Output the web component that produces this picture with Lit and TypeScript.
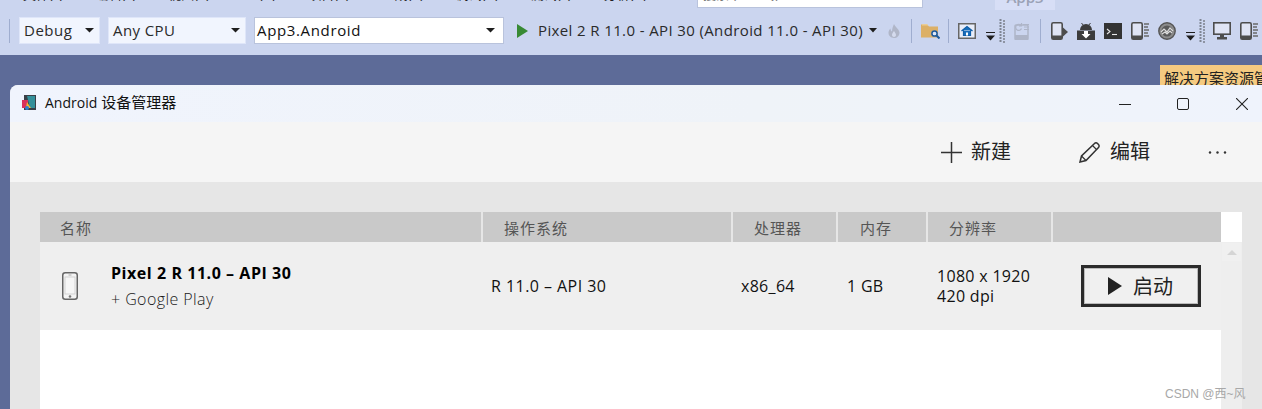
import { LitElement, html, css, svg } from "lit";
import { customElement } from "lit/decorators.js";

const caret = html`<svg class="caret" width="9" height="5" viewBox="0 0 9 5"><path d="M0 0h9L4.500 4.500z" fill="#1e1e1e"/></svg>`;
const dropdown = html`<svg class="dd" width="9" height="9" viewBox="0 0 9 9"><path d="M0 0.500h9" stroke="#1e1e1e" stroke-width="1"/><path d="M0 3.500h9L4.500 8.500z" fill="#1e1e1e"/></svg>`;
const grip = html`<svg class="grip" width="7" height="24" viewBox="0 0 7 24">${Array.from({ length: 8 }, (_, i) => svg`<rect x="0.500" y="${i * 3}" width="2" height="2" fill="#7f8593"/><rect x="4" y="${i * 3 + 1}" width="2" height="2" fill="#8e94a3"/>`)}</svg>`;
const deviceList = html`<svg class="ic" width="18" height="18" viewBox="0 0 18 18"><rect x="0.800" y="0.800" width="10.400" height="16.400" rx="1.500" fill="#dfe4f4" stroke="#4d4d4d" stroke-width="1.600"/><rect x="1" y="13.500" width="10" height="3.500" fill="#4d4d4d"/><path d="M13 2h5M13 5h4M13 8h5M13 11h4M13 14h5" stroke="#6a6a6a" stroke-width="1.500"/></svg>`;

@customElement("app-root")
export class AppRoot extends LitElement {
  static styles = css`
    :host { display: block; width: 1262px; height: 409px; overflow: hidden; position: relative; background: #5d6b98; font-family: "Open Sans", "Noto Sans CJK SC", sans-serif; color: #1e1e1e; }
    * { box-sizing: border-box; }
    .chrome { height: 55px; background: #cbd5ef; display: flex; flex-direction: column; }
    .menu { height: 10px; display: flex; align-items: flex-start; overflow: hidden; position: relative; }
    .menu-items { display: flex; gap: 32px; margin: -15px 0 0 23px; font: 13px/18px "Open Sans", "Noto Sans CJK SC", sans-serif; height: 18px; white-space: nowrap; }
    .search { position: absolute; left: 697px; top: 0; width: 226px; height: 8px; background: #fff; border: 1px solid #b9c3dc; border-top: 0; overflow: hidden; font-size: 13px; line-height: 18px; color: #777; }
    .search span { display: block; margin: -15px 0 0 5px; }
    .appbtn { position: absolute; left: 995px; top: 0; width: 60px; height: 10px; background: #d7def6; overflow: hidden; color: #9aa1b5; font-size: 15px; font-weight: 600; line-height: 18px; text-align: center; }
    .appbtn span { display: block; margin-top: -12px; }
    .tools { height: 27px; margin-top: 7px; display: flex; align-items: center; }
    .sep { width: 1px; height: 24px; background: #9fadcf; flex: none; }
    .s0 { margin-left: 9px; }
    .combo { height: 27px; display: flex; align-items: center; justify-content: space-between; background: #f1f5fe; border: 1px solid #dfe6f9; font-size: 15px; flex: none; color: #2a2a2a; }
    .combo span { margin-top: -2px; }
    .debug { width: 81px; margin-left: 9px; padding: 0 5px 0 4px; letter-spacing: 0.5px; }
    .cpu { width: 138px; margin-left: 8px; padding: 0 5px 0 4px; letter-spacing: 0.4px; }
    .proj { width: 250px; margin-left: 8px; padding: 0 8px 0 2px; background: #fff; border-color: #b9c3dc; color: #111; letter-spacing: 0.65px; }
    .play { margin-left: 13px; flex: none; }
    .target { margin: -2px 0 0 10px; font-size: 15px; letter-spacing: 0.38px; white-space: nowrap; color: #2a2a2a; width: 326px; flex: none; }
    .tcaret { margin-left: 5px; flex: none; }
    .flame { margin-left: 11px; flex: none; }
    .s1 { margin-left: 11px; }
    .folder { margin-left: 9px; flex: none; }
    .s2 { margin-left: 8px; }
    .home { margin-left: 9px; flex: none; }
    .dd { margin: 12px 0 0 10px; flex: none; }
    .grip { margin-left: 4px; flex: none; }
    .refresh { margin-left: 8px; flex: none; }
    .s3 { margin-left: 10px; }
    .ic { flex: none; margin-left: 9px; }
    .i1 { margin-left: 10px; }
    .mon { margin-left: 7px; }
    .desk { height: 30px; display: flex; justify-content: flex-end; padding-top: 10px; }
    .tab { width: 102px; height: 20px; background: #f5ca80; overflow: hidden; padding: 3px 0 0 4px; font-size: 15px; line-height: 20px; white-space: nowrap; color: #222; }
    .win { margin-left: 10px; height: 324px; border-radius: 8px 0 0 0; overflow: hidden; background: #e6e6e6; display: flex; flex-direction: column; }
    .title { height: 37px; flex: none; display: flex; align-items: center; background: linear-gradient(90deg, #f0f4fd, #eff3f8 60%, #eff3fc); padding: 0 0 2px 12px; font-size: 15px; color: #111; }
    .title .name { margin: -2px 0 0 8px; }
    .title .lat { font-size: 14px; }
    .wc { margin-left: auto; display: flex; align-items: center; margin-top: 2px; }
    .wc svg { flex: none; }
    .wc .mx { margin-left: 46px; }
    .wc .cl { margin: 0 14px 0 47px; }
    .cmd { height: 60px; flex: none; background: #f5f5f5; display: flex; align-items: center; justify-content: flex-end; font-size: 20px; color: #222; }
    .cmd .lbl { margin-left: 9px; line-height: 64px; }
    .cmd .l2 { margin-left: 10px; }
    .cmd .edit { margin-left: 68px; }
    .cmd .more { margin: 0 35px 0 58px; }
    .content { flex: 1; padding: 30px 20px 0 30px; display: flex; min-height: 0; }
    .tablewrap { flex: none; width: 1181px; background: #fff; display: flex; flex-direction: column; }
    .head { height: 30px; display: grid; grid-template-columns: 441px 248px 103px 88px 123px 1fr; gap: 2px; background: #e6e6e6; flex: none; }
    .head div { background: #c9c9c9; font-size: 15px; line-height: 33px; color: #555; letter-spacing: 1px; }
    .h1 { padding-left: 20px; } .h2 { padding-left: 21px; } .h3 { padding-left: 21px; } .h4 { padding-left: 22px; } .h5 { padding-left: 21px; }
    .row { height: 88px; flex: none; background: #efefef; display: grid; grid-template-columns: 443px 250px 106px 90px 152px 1fr; align-items: center; font-size: 16px; color: #111; }
    .namecell { display: flex; align-items: center; padding-left: 22px; }
    .names { margin-left: 33px; display: flex; flex-direction: column; }
    .names b { font-weight: 700; font-size: 16px; letter-spacing: 0.55px; line-height: 26px; color: #000; }
    .names span { font-size: 16px; letter-spacing: 0.42px; line-height: 26px; font-weight: 300; color: #1a1a1a; }
    .c2 { padding-left: 8px; letter-spacing: 0.45px; } .c3 { padding-left: 8px; letter-spacing: 0.3px; } .c4 { padding-left: 8px; letter-spacing: 0.3px; }
    .c5 { padding-left: 8px; line-height: 20px; letter-spacing: 0.3px; }
    .startc { display: flex; }
    .start { width: 120px; height: 42px; border: 3px solid #2b2b2b; box-shadow: inset 0 0 0 1px #bbb; background: #f0f0f0; display: flex; align-items: center; padding-left: 24px; font-size: 20px; color: #222; }
    .start svg { margin-right: 11px; flex: none; }
    .start span { margin-top: -2px; }
    .side { width: 21px; flex: none; display: flex; flex-direction: column; background: #fff; }
    .side .sp { height: 30px; flex: none; }
    .track { flex: 1; background: #eeeeee; display: flex; flex-direction: column; align-items: center; padding-top: 1px; }
    .up { width: 19px; height: 18px; display: flex; align-items: center; justify-content: center; background: #f0f0f0; }
    .mark { position: absolute; left: 1165px; top: 385px; font-size: 12px; line-height: 18px; color: #a8a8a8; font-family: "Liberation Sans", "Noto Sans CJK SC", sans-serif; white-space: nowrap; }
  `;

  render() {
    return html`
      <div class="chrome">
        <div class="menu">
          <div class="menu-items">
            <span>文件(F)</span><span>编辑(E)</span><span>视图(V)</span><span>Git(G)</span><span>项目(P)</span><span>生成(B)</span><span>调试(D)</span><span>测试(S)</span><span>分析(N)</span>
          </div>
          <div class="search"><span>搜索 (Ctrl+Q)</span></div>
          <div class="appbtn"><span>App3</span></div>
        </div>
        <div class="tools">
          <div class="sep s0"></div>
          <div class="combo debug"><span>Debug</span>${caret}</div>
          <div class="combo cpu"><span>Any CPU</span>${caret}</div>
          <div class="combo proj"><span>App3.Android</span>${caret}</div>
          <svg class="play" width="11" height="14" viewBox="0 0 11 14"><path d="M0 0l11 7-11 7z" fill="#388a34"/></svg>
          <div class="target">Pixel 2 R 11.0 - API 30 (Android 11.0 - API 30)</div>
          <svg class="tcaret" width="8" height="5" viewBox="0 0 8 5"><path d="M0 0h8L4 4.500z" fill="#1e1e1e"/></svg>
          <svg class="flame" width="12" height="14" viewBox="0 0 12 14"><path d="M6 0c1 3 5 5 5.500 8.500C11.500 12 9 14 6 14S.5 12 .5 8.800C.5 7 1.500 5.500 2.500 4.500c0 1.500.5 2.500 1.500 3C4 5 5 2 6 0z" fill="#b0b6c8"/><path d="M6 7c-1 1.500-2 2.500-2 4 0 1.200 1 2 2 2s2-.8 2-2c0-1.500-1.200-2.500-2-4z" fill="#d5dbee"/></svg>
          <div class="sep s1"></div>
          <svg class="folder" width="19" height="16" viewBox="0 0 19 16"><path d="M0 1.500h6l2 2h9v11H0z" fill="#dcb067"/><path d="M1 1h5l1.500 1.500H1z" fill="#eccd94"/><circle cx="13.500" cy="10.500" r="2.600" fill="#dfe8f8" stroke="#1c5a9e" stroke-width="1.500"/><path d="M15.500 12.500l3 3" stroke="#1c5a9e" stroke-width="2"/></svg>
          <div class="sep s2"></div>
          <svg class="home" width="18" height="16" viewBox="0 0 18 16"><rect x="0.750" y="0.750" width="16.500" height="14.500" fill="#e8edf9" stroke="#666" stroke-width="1.500"/><path d="M3.500 8L9 3.500 14.500 8M5.500 7.500v5h7v-5" fill="#1a6ebb" stroke="#0f5ea8" stroke-width="1.200"/><rect x="8" y="9.500" width="2" height="3" fill="#fff"/></svg>
          ${dropdown}${grip}
          <svg class="refresh" width="16" height="18" viewBox="0 0 16 18"><rect x="1" y="3" width="13" height="14.500" rx="1" fill="none" stroke="#aeb5c8" stroke-width="1.500"/><rect x="1" y="13" width="13" height="4" fill="#aeb5c8"/><path d="M7 3.500a3 3 0 1 0 .5 3M7.500 1v3H5" fill="none" stroke="#aeb5c8" stroke-width="1.200"/><path d="M9 2.500h6M10 5h5M10 7.500h5" stroke="#aeb5c8"/></svg>
          <div class="sep s3"></div>
          <svg class="ic i1" width="17" height="18" viewBox="0 0 17 18"><rect x="0.800" y="0.800" width="10.400" height="16.400" rx="1.500" fill="#dfe4f4" stroke="#4d4d4d" stroke-width="1.600"/><rect x="1" y="13.500" width="10" height="3.500" fill="#4d4d4d"/><path d="M12 5.500l5 4.500-5 4.500z" fill="#4d4d4d"/></svg>
          <svg class="ic" width="18" height="18" viewBox="0 0 18 18"><path d="M3 8a6 6 0 0 1 12 0z" fill="#3c3c3c"/><path d="M4.500 1l2 2.500M13.500 1l-2 2.500" stroke="#3c3c3c"/><rect x="0" y="8.500" width="18" height="9.500" fill="#3c3c3c"/><path d="M7 9h4v3h2.500L9 16.500 4.500 12H7z" fill="#fff"/></svg>
          <svg class="ic" width="18" height="16" viewBox="0 0 18 16"><rect width="18" height="16" fill="#333"/><path d="M3 6l3 2.500L3 11" fill="none" stroke="#e8e8e8" stroke-width="1.100"/><path d="M8 11.500h5" stroke="#e8e8e8" stroke-width="1.100"/></svg>
          ${deviceList}
          <svg class="ic" width="18" height="18" viewBox="0 0 18 18"><circle cx="9" cy="9" r="8.200" fill="#8c8c8c" stroke="#555" stroke-width="1.400"/><circle cx="9" cy="9" r="5.500" fill="#5a5a5a"/><path d="M3 10l3-3 3 3 3-4 3 3M4 12l3-2 2 2 3-3 2 2" fill="none" stroke="#dcdcdc" stroke-width="1.200"/></svg>
          ${dropdown}${grip}
          <svg class="ic mon" width="18" height="18" viewBox="0 0 18 18"><rect x="0.800" y="0.800" width="16.400" height="11.400" fill="#dfe4f4" stroke="#4d4d4d" stroke-width="1.600"/><path d="M7 13h4v2h3v2.500H4V15h3z" fill="#4d4d4d"/></svg>
          ${deviceList}
        </div>
      </div>
      <div class="desk"><div class="tab">解决方案资源管理器</div></div>
      <div class="win">
        <div class="title">
          <svg width="15" height="15" viewBox="0 0 15 15"><rect x="2" width="12" height="15" fill="#3a3f46"/><path d="M5 1h8v12H8z" fill="#34909a"/><path d="M0 5h6v8H0z" fill="#d9315c"/><path d="M5 7l4 6H4z" fill="#f2b632"/><circle cx="5" cy="13" r="2" fill="#2c7fd0"/></svg>
          <span class="name"><span class="lat">Android</span> 设备管理器</span>
          <div class="wc">
            <svg width="12" height="12" viewBox="0 0 12 12"><path d="M0 6.500h12" stroke="#222"/></svg>
            <svg class="mx" width="12" height="12" viewBox="0 0 12 12"><rect x="0.500" y="0.500" width="11" height="11" rx="1.500" fill="none" stroke="#222"/></svg>
            <svg class="cl" width="12" height="12" viewBox="0 0 12 12"><path d="M0 0l12 12M12 0L0 12" stroke="#222" stroke-width="1.100"/></svg>
          </div>
        </div>
        <div class="cmd">
          <svg width="21" height="21" viewBox="0 0 21 21"><path d="M0 10.500h21M10.500 0v21" stroke="#333" stroke-width="1.500"/></svg>
          <span class="lbl">新建</span>
          <svg class="edit" width="21" height="21" viewBox="0 0 21 21"><path d="M1 20l1.500-6L15.500 1.500a2.100 2.100 0 0 1 3 0l1 1a2.100 2.100 0 0 1 0 3L7 18.500z" fill="none" stroke="#333" stroke-width="1.500"/><path d="M13.500 3.500l4 4M2.500 14l4.500 4.500" stroke="#333" stroke-width="1.200"/></svg>
          <span class="lbl l2">编辑</span>
          <svg class="more" width="19" height="3" viewBox="0 0 19 3"><circle cx="2" cy="1.500" r="1.200" fill="#333"/><circle cx="9.500" cy="1.500" r="1.200" fill="#333"/><circle cx="17" cy="1.500" r="1.200" fill="#333"/></svg>
        </div>
        <div class="content">
          <div class="tablewrap">
            <div class="head">
              <div class="h1">名称</div><div class="h2">操作系统</div><div class="h3">处理器</div><div class="h4">内存</div><div class="h5">分辨率</div><div></div>
            </div>
            <div class="row">
              <div class="namecell">
                <svg width="16" height="28" viewBox="0 0 16 28"><rect x="0.750" y="0.750" width="14.500" height="26.500" rx="2.500" fill="#f4f4f4" stroke="#666" stroke-width="1.500"/><rect x="3" y="5" width="10" height="17" fill="#f6f6f6" stroke="#ccc" stroke-width="0.800"/><rect x="6.500" y="2.500" width="3" height="1" fill="#aaa"/><circle cx="8" cy="24.500" r="1.300" fill="#777"/></svg>
                <div class="names"><b>Pixel 2 R 11.0 – API 30</b><span>+ Google Play</span></div>
              </div>
              <div class="c2">R 11.0 – API 30</div>
              <div class="c3">x86_64</div>
              <div class="c4">1 GB</div>
              <div class="c5">1080 x 1920<br />420 dpi</div>
              <div class="startc">
                <div class="start"><svg width="14" height="18" viewBox="0 0 14 18"><path d="M0 0l14 9L0 18z" fill="#222"/></svg><span>启动</span></div>
              </div>
            </div>
          </div>
          <div class="side">
            <div class="sp"></div>
            <div class="track"><div class="up"><svg width="10" height="5" viewBox="0 0 10 5"><path d="M5 0l5 5H0z" fill="#d5d5d5"/></svg></div></div>
          </div>
        </div>
      </div>
      <div class="mark">CSDN @西~风</div>
    `;
  }
}
